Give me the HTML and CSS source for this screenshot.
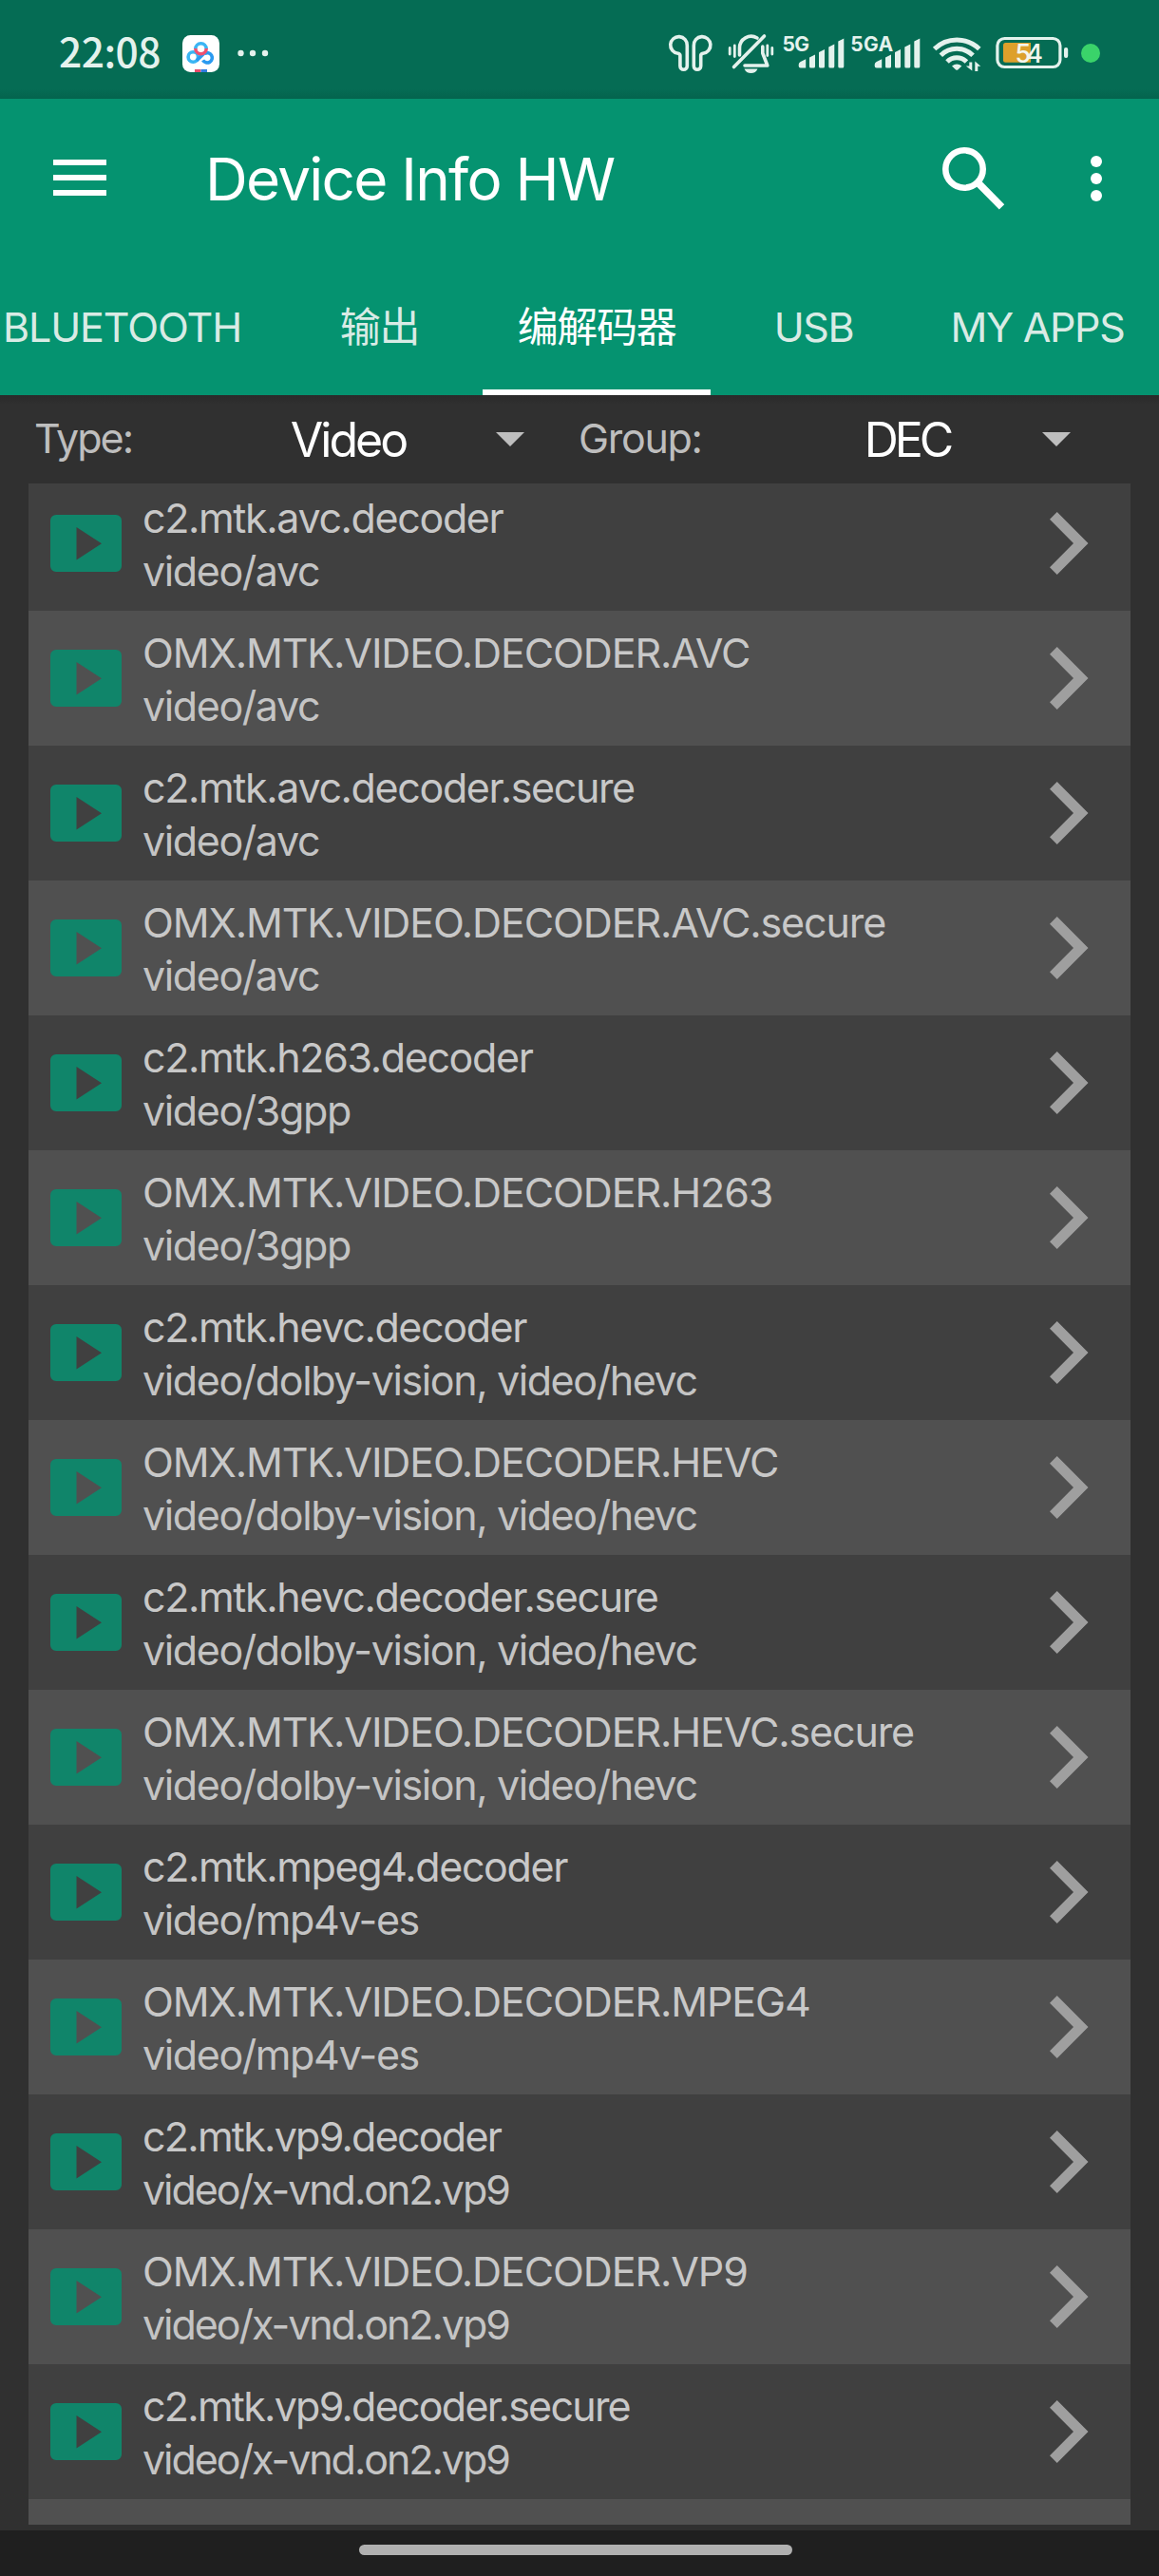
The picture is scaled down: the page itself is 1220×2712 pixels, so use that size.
FILE: index.html
```html
<!DOCTYPE html>
<html lang="zh-CN">
<head>
<meta charset="utf-8">
<title>Device Info HW</title>
<link rel="stylesheet" href="styles.css">
</head>
<body>
<svg class="defs" width="0" height="0">
  <symbol id="play" viewBox="0 0 75 60"><path fill-rule="evenodd" d="M6 0H69a6 6 0 0 1 6 6V54a6 6 0 0 1-6 6H6a6 6 0 0 1-6-6V6a6 6 0 0 1 6-6ZM27.5 13V47.5L54 30.2Z"/></symbol>
  <symbol id="chevron" viewBox="0 0 41 66"><path d="M7.7 0 40.5 33 7.7 66 0 58.2 25 33 0 7.8Z"/></symbol>
</svg>

<header class="status">
  <span class="clock">22:08</span>
  <svg class="app-badge" viewBox="0 0 39 39">
    <rect width="39" height="39" rx="8.5" fill="#fff"/>
    <g fill="none" stroke-width="3.6">
      <circle cx="11.3" cy="23" r="5.2" stroke="#3bb5f3"/>
      <path d="M15 26.8 23.5 18.5M23.4 19.4A5.2 5.2 0 1 1 21.6 26.4" stroke="#2a9af0"/>
      <path d="M13.8 14.5A5.7 5.7 0 0 1 25.2 14.5" stroke="#3bb5f3"/>
      <path d="M13.8 14A5.7 5.7 0 0 0 25.2 14" stroke="#ef5070"/>
    </g>
    <path d="M13 36h6.5v3H13z" fill="#e84c6a"/><path d="M19.500 36H26v3h-6.500z" fill="#2f7de0"/>
  </svg>
  <svg class="more-dots" viewBox="0 0 34 8" fill="#e4f2ed"><circle cx="4.500" cy="4" r="3.200"/><circle cx="17" cy="4" r="3.200"/><circle cx="30" cy="4" r="3.200"/></svg>
  <svg class="status-icons" viewBox="700 30 480 52" fill="#e4f2ed">
    <g fill="none" stroke="#e4f2ed" stroke-width="3.600" stroke-linejoin="round">
      <path d="M723.300 48V69.500a3.700 3.700 0 0 1-7.400 0V58.500q0-1.800-2.200-2.300A8.800 8.800 0 1 1 723.300 48Z"/>
      <path d="M730.300 48V69.500a3.700 3.700 0 0 0 7.400 0V58.500q0-1.800 2.200-2.300A8.800 8.800 0 1 0 730.300 48Z"/>
      <g stroke-linecap="round">
        <path d="M772.500 70.500 804.500 38"/>
        <path d="M778.500 58V50.500A12.200 12.200 0 0 1 797 40"/>
        <path d="M802.800 49V56L807.800 69H784"/>
        <path d="M768.200 50.500v6.500M773.300 48v11.500M807.800 48v10.500M812.800 50.500v6.500" stroke-width="2.800"/>
      </g>
    </g>
    <path d="M783.500 72.500h14q-2 4.500-7 4.500t-7-4.500Z"/>
    <text class="net" x="823.500" y="54.300" textLength="28.500">5G</text>
    <text class="net" x="895.300" y="54.300" textLength="45">5GA</text>
    <path id="bars" d="M840.700 68q0-2 2-3l5.500-2.700V71.500h-5.500q-2 0-2-2ZM852 60.500l6-3V70q0 1.500-1.500 1.500h-3q-1.500 0-1.500-1.500ZM862 55l6-3V70q0 1.500-1.500 1.500h-3q-1.500 0-1.500-1.500ZM872.300 49.500l6-3V70q0 1.500-1.500 1.500h-3q-1.500 0-1.500-1.500ZM882.300 43.500l6-3V70q0 1.500-1.500 1.500h-3q-1.500 0-1.500-1.500Z"/>
    <use href="#bars" x="80"/>
    <g fill="none" stroke="#e4f2ed" stroke-width="5">
      <path d="M983.600 51.500A34 34 0 0 1 1030.800 51.500"/>
      <path d="M990.300 58.300A24 24 0 0 1 1024.100 58.300"/>
      <path d="M997 65A14.500 14.500 0 0 1 1017.400 65"/>
    </g>
    <path d="M1002 69.500Q1007.200 65.500 1012.400 69.500L1008.500 73.300Q1007.200 74.300 1005.900 73.300Z"/>
    <path d="M1020.300 65.500h3V74.500l-6.500-5h3.500ZM1026.300 75V64.500l6 5.300h-3V75Z"/>
    <rect x="1049.900" y="40.500" width="66" height="30" rx="7.500" fill="none" stroke="#e4f2ed" stroke-width="3.200"/>
    <rect x="1120" y="50" width="4.200" height="11" rx="2"/>
    <path d="M1085 45V65.700H1058.500q-2.500 0-2.500-2.500V47.500q0-2.500 2.500-2.500Z" fill="#dda02b"/>
    <text class="battery" x="1068.500" y="65.500" textLength="29.500">54</text>
    <circle cx="1148" cy="56" r="10" fill="#3ad36a"/>
  </svg>
</header>

<div class="appbar">
  <div class="toolbar">
    <svg class="menu" viewBox="0 0 56 38" fill="#fff"><path d="M0 0h56v6H0zM0 16h56v6H0zM0 32h56v6H0z"/></svg>
    <h1 class="title">Device Info HW</h1>
    <svg class="search" viewBox="0 0 66 66" fill="none" stroke="#fff"><circle cx="23" cy="23" r="19.700" stroke-width="6.600"/><path d="M38.500 38.500 62.500 62.800" stroke-width="7.600"/></svg>
    <svg class="overflow" viewBox="0 0 12 48" fill="#fff"><circle cx="6" cy="6" r="6"/><circle cx="6" cy="24" r="6"/><circle cx="6" cy="42" r="6"/></svg>
  </div>
  <nav class="tabs">
    <span class="tab tab-bluetooth">BLUETOOTH</span>
    <span class="tab">输出</span>
    <span class="tab tab-codec">编解码器</span>
    <span class="tab">USB</span>
    <span class="tab tab-apps">MY APPS</span>
  </nav>
</div>

<div class="filters">
  <span class="label">Type:</span>
  <span class="value value-type">Video</span>
  <span class="arrow"></span>
  <span class="label label-group">Group:</span>
  <span class="value value-group">DEC</span>
  <span class="arrow"></span>
</div>

<main class="list">
  <div class="row"><svg class="play"><use href="#play"/></svg><div class="text"><div class="name lower">c2.mtk.avc.decoder</div><div class="mime">video/avc</div></div><svg class="chevron"><use href="#chevron"/></svg></div>
  <div class="row"><svg class="play"><use href="#play"/></svg><div class="text"><div class="name">OMX.MTK.VIDEO.DECODER.AVC</div><div class="mime">video/avc</div></div><svg class="chevron"><use href="#chevron"/></svg></div>
  <div class="row"><svg class="play"><use href="#play"/></svg><div class="text"><div class="name lower">c2.mtk.avc.decoder.secure</div><div class="mime">video/avc</div></div><svg class="chevron"><use href="#chevron"/></svg></div>
  <div class="row"><svg class="play"><use href="#play"/></svg><div class="text"><div class="name">OMX.MTK.VIDEO.DECODER.AVC.secure</div><div class="mime">video/avc</div></div><svg class="chevron"><use href="#chevron"/></svg></div>
  <div class="row"><svg class="play"><use href="#play"/></svg><div class="text"><div class="name lower">c2.mtk.h263.decoder</div><div class="mime">video/3gpp</div></div><svg class="chevron"><use href="#chevron"/></svg></div>
  <div class="row"><svg class="play"><use href="#play"/></svg><div class="text"><div class="name">OMX.MTK.VIDEO.DECODER.H263</div><div class="mime">video/3gpp</div></div><svg class="chevron"><use href="#chevron"/></svg></div>
  <div class="row"><svg class="play"><use href="#play"/></svg><div class="text"><div class="name lower">c2.mtk.hevc.decoder</div><div class="mime">video/dolby-vision, video/hevc</div></div><svg class="chevron"><use href="#chevron"/></svg></div>
  <div class="row"><svg class="play"><use href="#play"/></svg><div class="text"><div class="name">OMX.MTK.VIDEO.DECODER.HEVC</div><div class="mime">video/dolby-vision, video/hevc</div></div><svg class="chevron"><use href="#chevron"/></svg></div>
  <div class="row"><svg class="play"><use href="#play"/></svg><div class="text"><div class="name lower">c2.mtk.hevc.decoder.secure</div><div class="mime">video/dolby-vision, video/hevc</div></div><svg class="chevron"><use href="#chevron"/></svg></div>
  <div class="row"><svg class="play"><use href="#play"/></svg><div class="text"><div class="name">OMX.MTK.VIDEO.DECODER.HEVC.secure</div><div class="mime">video/dolby-vision, video/hevc</div></div><svg class="chevron"><use href="#chevron"/></svg></div>
  <div class="row"><svg class="play"><use href="#play"/></svg><div class="text"><div class="name lower">c2.mtk.mpeg4.decoder</div><div class="mime">video/mp4v-es</div></div><svg class="chevron"><use href="#chevron"/></svg></div>
  <div class="row"><svg class="play"><use href="#play"/></svg><div class="text"><div class="name">OMX.MTK.VIDEO.DECODER.MPEG4</div><div class="mime">video/mp4v-es</div></div><svg class="chevron"><use href="#chevron"/></svg></div>
  <div class="row"><svg class="play"><use href="#play"/></svg><div class="text"><div class="name tight">c2.mtk.vp9.decoder</div><div class="mime tight">video/x-vnd.on2.vp9</div></div><svg class="chevron"><use href="#chevron"/></svg></div>
  <div class="row"><svg class="play"><use href="#play"/></svg><div class="text"><div class="name">OMX.MTK.VIDEO.DECODER.VP9</div><div class="mime tight">video/x-vnd.on2.vp9</div></div><svg class="chevron"><use href="#chevron"/></svg></div>
  <div class="row"><svg class="play"><use href="#play"/></svg><div class="text"><div class="name tight">c2.mtk.vp9.decoder.secure</div><div class="mime tight">video/x-vnd.on2.vp9</div></div><svg class="chevron"><use href="#chevron"/></svg></div>
  <div class="row row-next"></div>
</main>

<footer class="navbar"><span class="pill"></span></footer>
</body>
</html>
```
FILE: styles.css
```css
* { box-sizing: border-box; }
body {
  margin: 0;
  width: 1220px;
  height: 2712px;
  display: flex;
  flex-direction: column;
  overflow: hidden;
  background: #303030;
  font-family: Inter, "Noto Sans CJK SC", sans-serif;
  white-space: nowrap;
}
svg { display: block; flex: none; }
.defs { position: absolute; }

.status {
  height: 104px;
  flex: none;
  display: flex;
  align-items: center;
  padding: 8px 40px 0 62px;
  background: linear-gradient(#056c54 90%, #04634d);
}
.clock {
  width: 130px;
  margin-bottom: 6px;
  font: 500 42.500px/60px "Noto Sans CJK SC", sans-serif;
  letter-spacing: -0.500px;
  color: #e4f2ed;
}
.app-badge { width: 39px; height: 39px; }
.more-dots { width: 34px; height: 8px; margin-left: 18px; }
.status-icons { width: 480px; height: 52px; margin-left: auto; }
.net { font: 700 21px Inter, sans-serif; }
.battery { font: 500 27px Inter, sans-serif; fill: #f4f6ee; }

.appbar { height: 312px; flex: none; background: #059370; }
.toolbar {
  height: 168px;
  display: flex;
  align-items: center;
  padding: 0 60px 0 56px;
}
.menu { width: 56px; height: 38px; margin-top: -2px; }
.title {
  margin: 2px auto 0 104px;
  font-size: 62px;
  font-weight: 400;
  line-height: 80px;
  letter-spacing: -1.750px;
  color: #fff;
}
.search { width: 66px; height: 66px; }
.overflow { width: 12px; height: 48px; margin-left: 90px; }
.tabs { height: 144px; display: flex; margin-left: -34px; }
.tab {
  flex: none;
  width: 217px;
  height: 144px;
  padding-top: 42px;
  text-align: center;
  font-size: 43px;
  line-height: 60px;
  letter-spacing: -1.350px;
  color: #d9ebe5;
}
.tab-bluetooth { width: 325px; letter-spacing: -1.100px; }
.tab-codec { width: 240px; color: #fff; border-bottom: 6px solid #fff; }
.tab-apps { width: 254px; }

.filters {
  height: 93px;
  flex: none;
  display: flex;
  align-items: center;
  padding-left: 36px;
  background: linear-gradient(#2a2a2a, #303030 10px);
}
.label {
  width: 153px;
  margin-bottom: 3px;
  font-size: 43px;
  letter-spacing: -2px;
  color: #bebebe;
}
.label-group { width: 171px; margin-left: 57px; letter-spacing: -1.300px; }
.value {
  font-size: 50px;
  letter-spacing: -3px;
  text-align: center;
  color: #fff;
}
.value-type { width: 333px; padding-left: 22px; }
.value-group { width: 317px; padding-left: 33px; letter-spacing: -4px; }
.arrow {
  width: 30px;
  height: 15px;
  background: #bebebe;
  clip-path: polygon(0 0, 100% 0, 50% 100%);
}

.list {
  height: 2149px;
  flex: none;
  margin: 0 30px;
  overflow: hidden;
  display: flex;
  flex-direction: column;
  justify-content: flex-end;
}
.row {
  height: 142px;
  flex: none;
  display: flex;
  align-items: center;
  padding: 0 44px 0 23px;
  background: #404040;
}
.row:nth-child(even) { background: #505050; }
.row-next { height: 27px; }
.play { width: 75px; height: 60px; fill: #10856a; }
.text { margin: 2px auto 0 22px; }
.name, .mime { font-size: 43px; line-height: 56px; color: #c8c8c8; }
.name { letter-spacing: -1.120px; }
.name.lower { letter-spacing: -1.370px; }
.name.tight { letter-spacing: -1.750px; }
.mime { font-weight: 400; color: #c4c4c4; letter-spacing: -1.400px; }
.mime.tight { letter-spacing: -2.050px; }
.chevron { width: 41px; height: 66px; fill: #9f9f9f; }

.navbar {
  height: 48px;
  flex: none;
  margin-top: 6px;
  display: flex;
  justify-content: center;
  padding-top: 15px;
  background: #1f1f1f;
}
.pill { width: 456px; height: 11px; margin-right: 8px; border-radius: 6px; background: #b0b0b0; }
```
